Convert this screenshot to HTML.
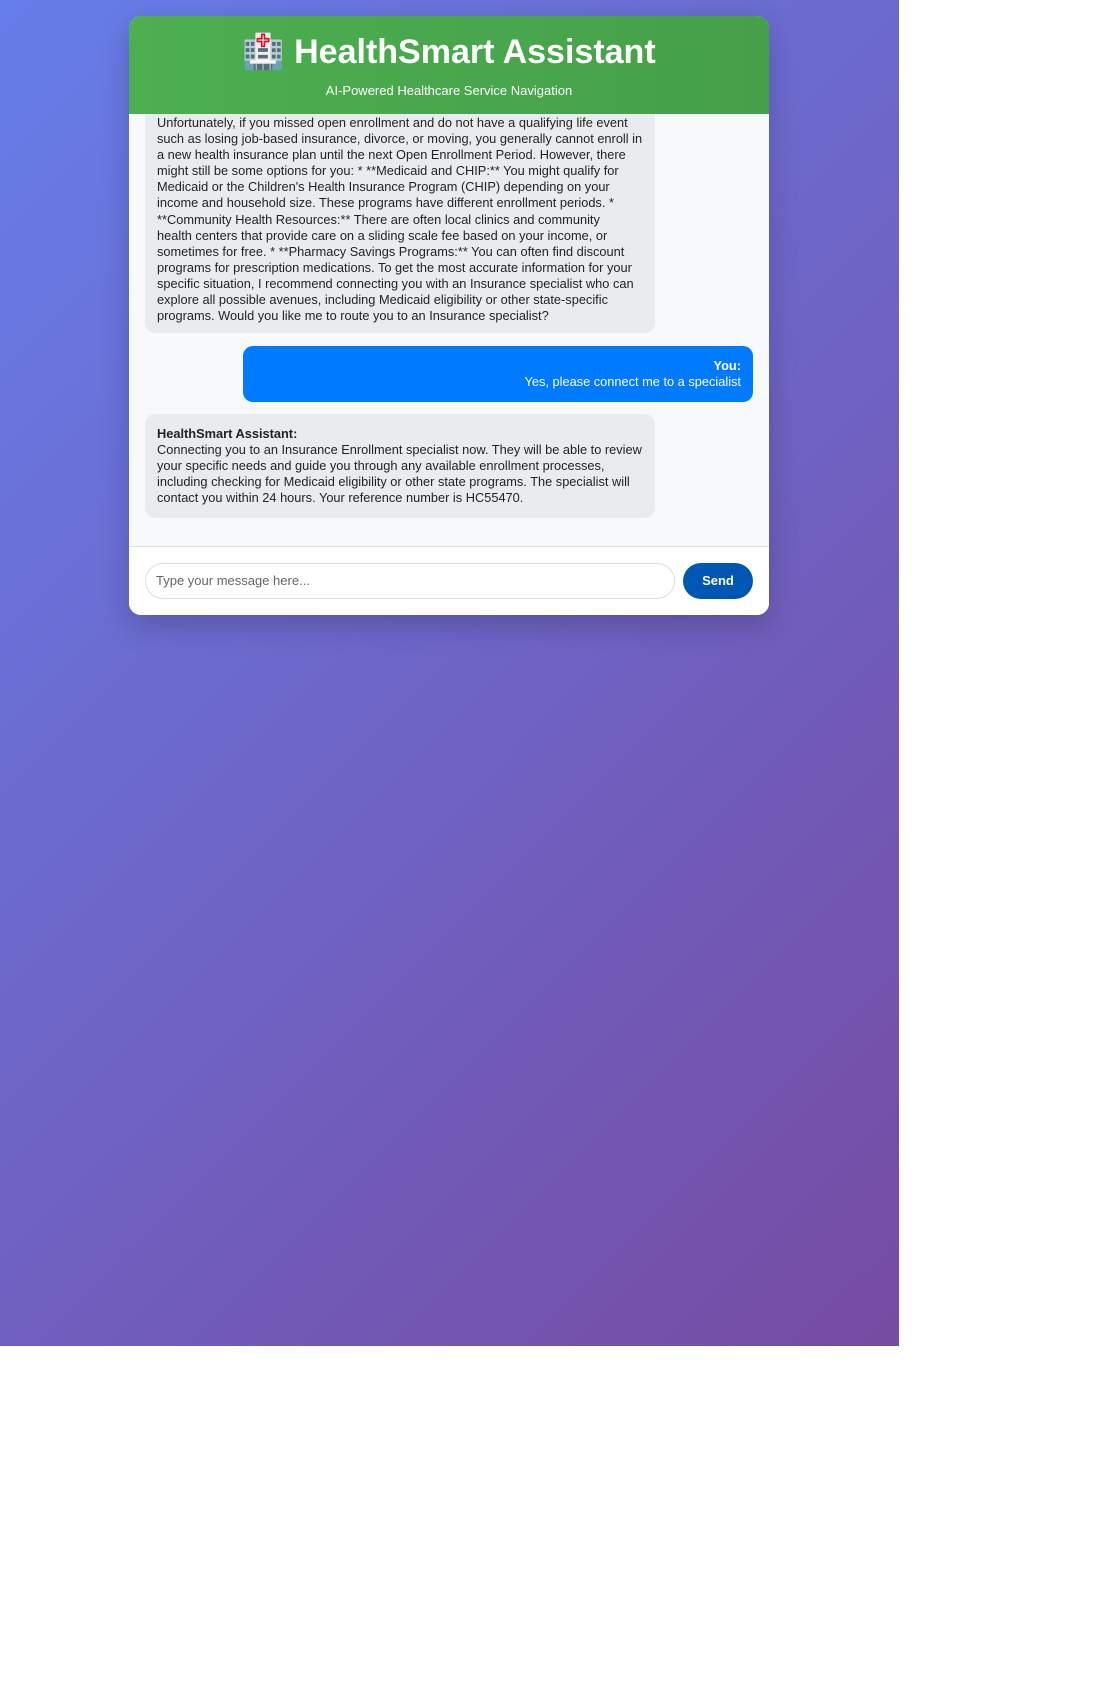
<!DOCTYPE html>
<html><head><meta charset="utf-8"><style>
html,body{margin:0;padding:0;background:#fff;}
body{width:1104px;height:1681px;position:relative;overflow:hidden;font-family:"Liberation Sans",sans-serif;}
.bg{position:absolute;left:0;top:0;width:899px;height:1346px;background:linear-gradient(135deg,#667eea 0%,#764ba2 100%);}
.card{position:absolute;left:129px;top:16px;width:640px;height:599px;background:#f8f9fa;border-radius:12px;overflow:hidden;box-shadow:0 10px 30px rgba(0,0,0,.2);}
.hdr{position:absolute;left:0;top:0;width:640px;height:98px;background:linear-gradient(90deg,#4CAF50,#45a049);color:#fff;text-align:center;z-index:2;}
.hdr h1{margin:0;position:absolute;top:16px;width:100%;font-size:34px;font-weight:bold;line-height:40px;}
.hdr p{margin:0;position:absolute;top:67px;width:100%;font-size:13px;}
.b{position:absolute;border-radius:10px;font-size:12.8px;line-height:16.1px;white-space:nowrap;color:#222;}
.bot{background:#e9ecef;left:16px;width:486px;padding:0 12px;}
.user{background:#007bff;color:#fff;left:114px;width:486px;padding:0 12px;text-align:right;}
.foot{position:absolute;left:0;top:530px;width:640px;height:69px;background:#fff;border-top:1px solid #dee2e6;}
.inp{position:absolute;left:16px;top:16px;border:1px solid #ddd;border-radius:18px;font-size:13px;color:#666;line-height:34px;padding-left:10px;box-sizing:border-box;width:530px;height:36px;}
.send{position:absolute;left:554px;top:16px;width:70px;height:36px;border-radius:18px;background:#0056b3;color:#fff;font-size:13px;font-weight:bold;text-align:center;line-height:36px;}
</style></head><body>
<div class="bg"></div>
<div class="card">
<div class="hdr"><h1>🏥 HealthSmart Assistant</h1><p>AI-Powered Healthcare Service Navigation</p></div>
<div class="b bot" style="top:60px;height:257px;"><div style="position:absolute;top:39px;left:12px;">Unfortunately, if you missed open enrollment and do not have a qualifying life event<br>such as losing job-based insurance, divorce, or moving, you generally cannot enroll in<br>a new health insurance plan until the next Open Enrollment Period. However, there<br>might still be some options for you: * **Medicaid and CHIP:** You might qualify for<br>Medicaid or the Children's Health Insurance Program (CHIP) depending on your<br>income and household size. These programs have different enrollment periods. *<br>**Community Health Resources:** There are often local clinics and community<br>health centers that provide care on a sliding scale fee based on your income, or<br>sometimes for free. * **Pharmacy Savings Programs:** You can often find discount<br>programs for prescription medications. To get the most accurate information for your<br>specific situation, I recommend connecting you with an Insurance specialist who can<br>explore all possible avenues, including Medicaid eligibility or other state-specific<br>programs. Would you like me to route you to an Insurance specialist?</div></div>
<div class="b user" style="top:330px;height:56px;"><div style="padding-top:12px;"><b>You:</b><br>Yes, please connect me to a specialist</div></div>
<div class="b bot" style="top:398px;height:104px;"><div style="padding-top:12px;"><b>HealthSmart Assistant:</b><br>Connecting you to an Insurance Enrollment specialist now. They will be able to review<br>your specific needs and guide you through any available enrollment processes,<br>including checking for Medicaid eligibility or other state programs. The specialist will<br>contact you within 24 hours. Your reference number is HC55470.</div></div>
<div class="foot"><div class="inp">Type your message here...</div><div class="send">Send</div></div>
</div>
</body></html>
